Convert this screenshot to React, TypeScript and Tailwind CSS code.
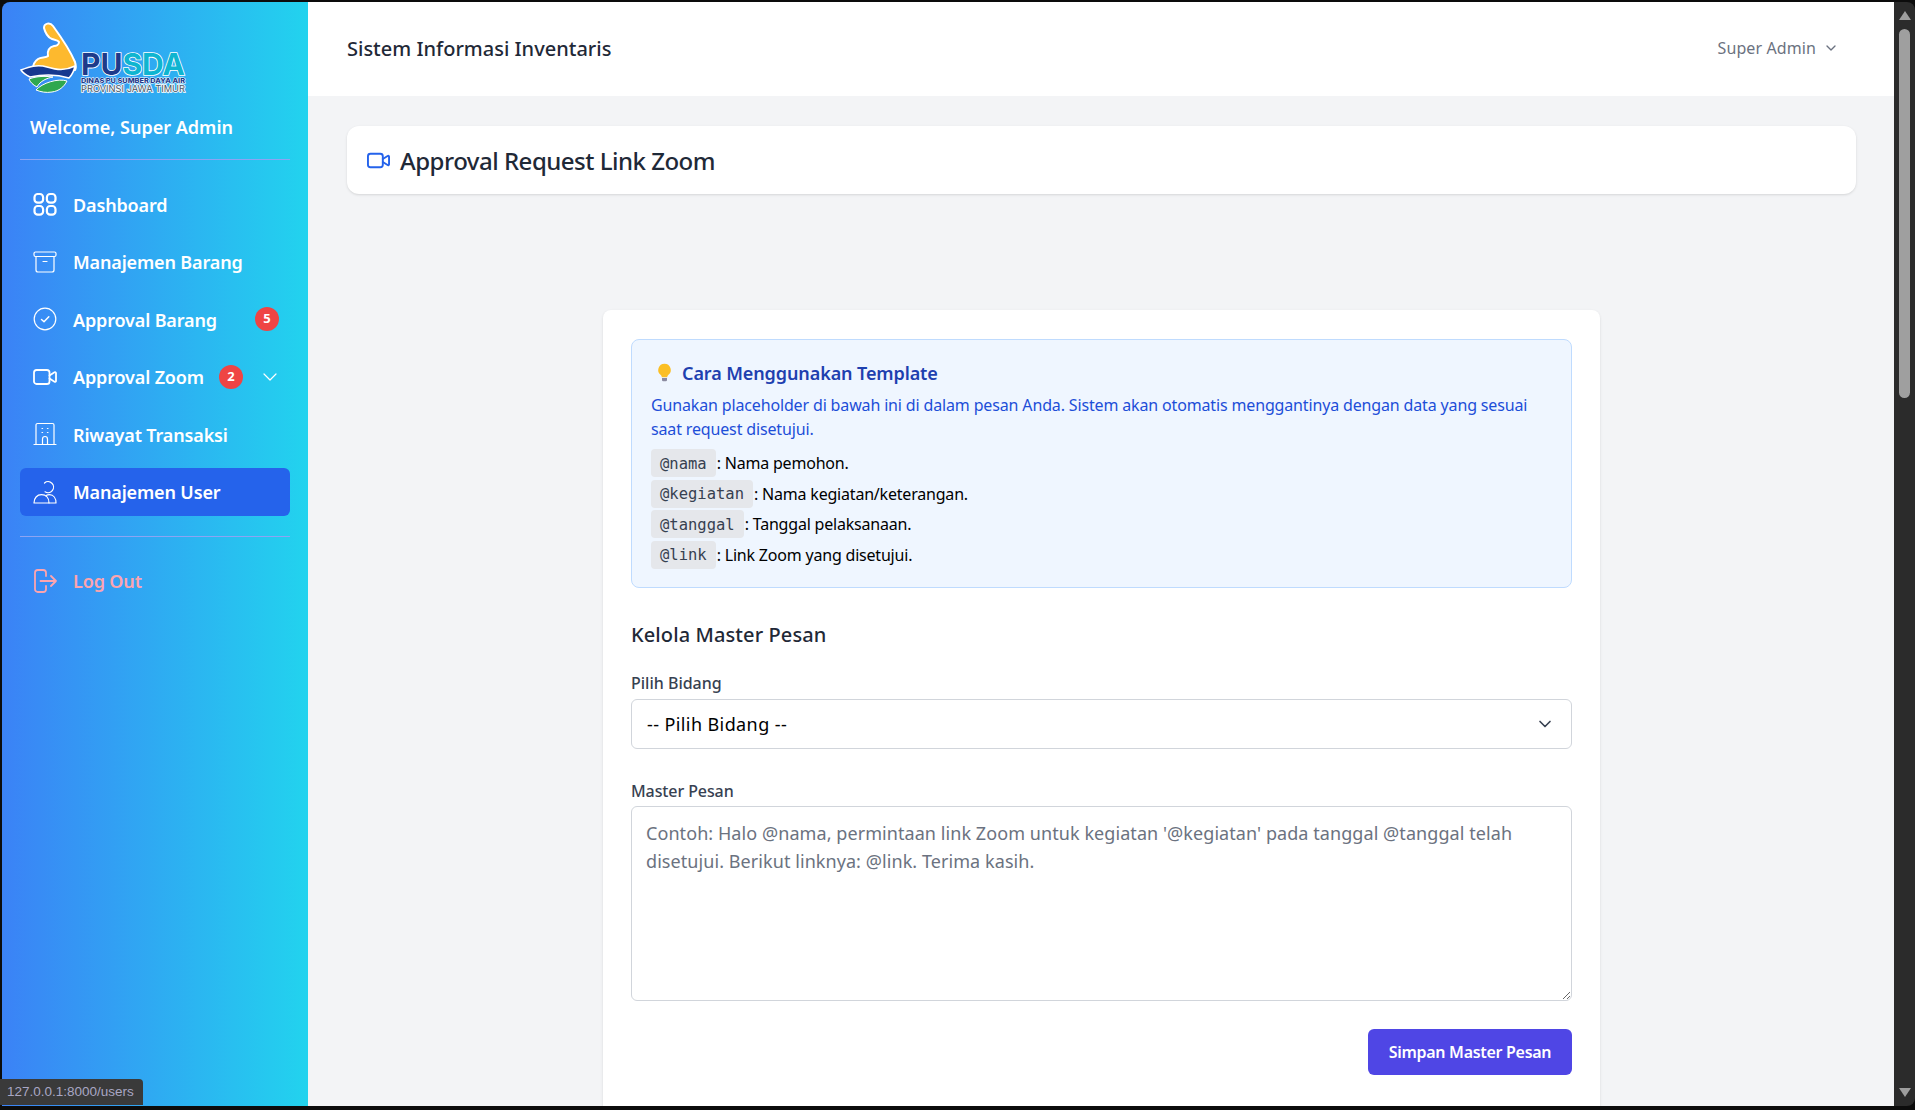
import { ChevronDown } from "lucide-react";
import type { ReactNode } from "react";

const font = "font-['Noto_Sans',sans-serif]";

function Logo() {
  return (
    <svg viewBox="0 0 175 85" className="block w-[175px] h-[85px]">
      <path
        d="M24 13c0-5 6-6 9-2 8 11 17 24 22 36 1 3 1 6 0 8-12 3-28 1-42-1 0-4 2-8 5-10 3-2 8-1 10-3-1-5 1-9 6-10 2 0 5-1 5-4-1-2-4-2-7-3-4-1-7-7-8-11z"
        fill="#fdb92e"
        stroke="#fff"
        strokeWidth="2"
      />
      <path
        d="M1 55c8-3 16-6 26-3 10 3 18 4 28-1-1 5-3 9-6 12-10-3-24-4-39-1-4-2-7-4-9-7z"
        fill="#16388f"
        stroke="#fff"
        strokeWidth="1.5"
      />
      <path
        d="M9 64c8-3 16-3 24-2-6 1-13 4-16 10-4-2-7-5-8-8z"
        fill="#2fa84f"
        stroke="#fff"
        strokeWidth="1"
      />
      <path
        d="M16 75c6-7 22-12 31-9-3 6-8 10-15 11-6 1-11 0-16-2z"
        fill="#2fa84f"
        stroke="#fff"
        strokeWidth="1"
      />
      <text
        x="61"
        y="60"
        fontFamily="Inter, sans-serif"
        fontSize="30"
        fontWeight="700"
        textLength="104"
        lengthAdjust="spacingAndGlyphs"
        stroke="#fff"
        strokeWidth="1.6"
        paintOrder="stroke"
      >
        <tspan fill="#1e3a8a">PU</tspan>
        <tspan fill="#0fb5d0">SDA</tspan>
      </text>
      <text
        x="61"
        y="68"
        fontFamily="Inter, sans-serif"
        fontSize="6.4"
        fontWeight="800"
        fill="#1e3a8a"
        textLength="104"
        lengthAdjust="spacingAndGlyphs"
        stroke="#fff"
        strokeWidth="1"
        paintOrder="stroke"
      >
        DINAS PU SUMBER DAYA AIR
      </text>
      <text
        x="61"
        y="77"
        fontFamily="Inter, sans-serif"
        fontSize="9"
        fontWeight="400"
        fill="#4b5563"
        textLength="104"
        lengthAdjust="spacingAndGlyphs"
        stroke="#fff"
        strokeWidth="1.6"
        paintOrder="stroke"
      >
        PROVINSI JAWA TIMUR
      </text>
    </svg>
  );
}

function Icon({ children, className }: { children: ReactNode; className?: string }) {
  return (
    <svg
      viewBox="0 0 24 24"
      fill="none"
      stroke="currentColor"
      strokeLinecap="round"
      strokeLinejoin="round"
      className={className ?? "w-6 h-6 shrink-0"}
    >
      {children}
    </svg>
  );
}

function GridIcon() {
  return (
    <Icon>
      <g strokeWidth="2.2">
        <rect x="1.5" y="2" width="8.6" height="8.6" rx="3.2" />
        <rect x="13.9" y="2" width="8.6" height="8.6" rx="3.2" />
        <rect x="1.5" y="14" width="8.6" height="8.6" rx="3.2" />
        <rect x="13.9" y="14" width="8.6" height="8.6" rx="3.2" />
      </g>
    </Icon>
  );
}

function BoxIcon() {
  return (
    <Icon>
      <g strokeWidth="1.2">
        <rect x="1" y="2" width="22" height="4.5" rx="1.5" />
        <path d="M3 6.5V20a2 2 0 0 0 2 2h14a2 2 0 0 0 2-2V6.5" />
        <path d="M10 11.5h4" />
      </g>
    </Icon>
  );
}

function CheckIcon() {
  return (
    <Icon>
      <g strokeWidth="1.2">
        <circle cx="12" cy="12" r="10.8" />
        <path d="M8.5 12.5l2.5 2.2 4.8-5" strokeWidth="1.5" />
      </g>
    </Icon>
  );
}

function VideoIcon({ className, width = 1.8 }: { className?: string; width?: number }) {
  return (
    <Icon className={className}>
      <g strokeWidth={width}>
        <rect x="1" y="5" width="15.5" height="14" rx="2.6" />
        <path d="M16.5 10.5l5-3.2c.7-.4 1.5 0 1.5.8v7.8c0 .8-.8 1.2-1.5.8l-5-3.2" />
      </g>
    </Icon>
  );
}

function BuildingIcon() {
  return (
    <Icon>
      <g strokeWidth="1.2">
        <path d="M3 22.5V3a1.5 1.5 0 0 1 1.5-1.5h15A1.5 1.5 0 0 1 21 3v19.5" />
        <path d="M1 22.5h22" />
        <path d="M9.5 22.5V17a2.5 2.5 0 0 1 5 0v5.5" />
        <path d="M9 6.5h.6M14.4 6.5h.6M9 10.5h.6M14.4 10.5h.6" />
      </g>
    </Icon>
  );
}

function UserIcon() {
  return (
    <Icon>
      <g strokeWidth="1.2">
        <path d="M11.5 3a5.5 5.5 0 1 1 .5 8.8" />
        <path d="M1 23c0-5 3-8.3 7.5-8.3S16 18 16 23z" />
        <path d="M13 15.6c1-.6 2.2-.9 3.5-.9 4 0 6.5 3.5 6.5 8.3h-7" />
      </g>
    </Icon>
  );
}

function LogoutIcon() {
  return (
    <Icon>
      <g strokeWidth="1.8">
        <path d="M13 7V3.8A2.8 2.8 0 0 0 10.2 1H4.8A2.8 2.8 0 0 0 2 3.8v16.4A2.8 2.8 0 0 0 4.8 23h5.4a2.8 2.8 0 0 0 2.8-2.8V17" />
        <path d="M7.5 12H23M18 7l5 5-5 5" />
      </g>
    </Icon>
  );
}

function Badge({ value }: { value: number }) {
  return (
    <span className="flex items-center justify-center w-6 h-6 rounded-full bg-[#ef4444] text-white text-[13px] font-bold shrink-0">
      {value}
    </span>
  );
}

function NavItem({
  icon,
  label,
  active,
  children,
}: {
  icon: ReactNode;
  label: string;
  active?: boolean;
  children?: ReactNode;
}) {
  return (
    <div
      className={`flex items-center h-12 pl-[13px] pr-[10px] rounded-md text-white ${
        active ? "bg-[#2563eb]" : ""
      }`}
    >
      {icon}
      <span className="ml-[16px] pt-[2px] text-[18px] font-semibold tracking-[-0.15px] whitespace-nowrap">
        {label}
      </span>
      {children}
    </div>
  );
}

function Sidebar() {
  return (
    <aside className="w-[306px] shrink-0 rounded-tl-lg bg-[linear-gradient(to_right,#3b82f6,#22d3ee)] px-[18px] overflow-hidden">
      <div className="pt-[13px]">
        <Logo />
      </div>
      <p className="mt-[13px] ml-[10px] text-[18px] leading-7 font-semibold text-white">
        Welcome, Super Admin
      </p>
      <div className="mt-[18px] h-px bg-[#8ca4f3]" />
      <nav className="mt-[20px] flex flex-col gap-[9.5px]">
        <NavItem icon={<GridIcon />} label="Dashboard" />
        <NavItem icon={<BoxIcon />} label="Manajemen Barang" />
        <NavItem icon={<CheckIcon />} label="Approval Barang">
          <span className="ml-auto mr-[1px]">
            <Badge value={5} />
          </span>
        </NavItem>
        <NavItem icon={<VideoIcon />} label="Approval Zoom">
          <span className="ml-[15px]">
            <Badge value={2} />
          </span>
          <ChevronDown className="ml-auto -mr-[2px] w-6 h-6 text-white" strokeWidth={1.2} />
        </NavItem>
        <NavItem icon={<BuildingIcon />} label="Riwayat Transaksi" />
        <NavItem icon={<UserIcon />} label="Manajemen User" active />
      </nav>
      <div className="mt-[20px] h-px bg-[#8ca4f3]" />
      <div className="mt-[20px] flex items-center h-12 pl-[13px] text-[#fda4af]">
        <LogoutIcon />
        <span className="ml-[16px] pt-[2px] text-[18px] font-semibold tracking-[-0.15px]">Log Out</span>
      </div>
    </aside>
  );
}

function Header() {
  return (
    <header className="h-[94px] shrink-0 bg-white flex items-center justify-between pl-[39px] pr-[55px]">
      <h1 className="text-[20px] font-medium text-[#1f2937]">Sistem Informasi Inventaris</h1>
      <div className="flex items-center gap-[7px] text-[#6b7280] -mt-[2px]">
        <span className="text-[16px] tracking-[0.1px]">Super Admin</span>
        <ChevronDown className="w-4 h-4" strokeWidth={2} />
      </div>
    </header>
  );
}

function Placeholder({ code, text }: { code: string; text: string }) {
  return (
    <li className="h-[30.5px] flex items-center text-[16px] tracking-[-0.2px] text-black">
      <code className="bg-[#e5e7eb] rounded h-7 px-[9px] pt-[2px] flex items-center font-['DejaVu_Sans_Mono',monospace] text-[#374151] text-[15.5px] tracking-normal">
        {code}
      </code>
      <span className="ml-[1px]">: {text}</span>
    </li>
  );
}

function InfoBox() {
  return (
    <div className="rounded-lg border border-[#bfdbfe] bg-[#eff6ff] px-[19px] pt-[19px] pb-[17px]">
      <div className="flex items-center h-7">
        <svg viewBox="0 0 20 24" className="w-[17px] h-[20px] ml-[5px] shrink-0">
          <path d="M10 1a7.5 7.5 0 0 0-4.5 13.5c.8.7 1.2 1.6 1.3 2.5h6.4c.1-.9.5-1.8 1.3-2.5A7.5 7.5 0 0 0 10 1z" fill="#fbbf24" />
          <path d="M7 18h6v2.5a1.5 1.5 0 0 1-1.5 1.5h-3A1.5 1.5 0 0 1 7 20.5z" fill="#8b8ba0" />
        </svg>
        <h3 className="ml-[9px] text-[18px] font-semibold tracking-[-0.1px] text-[#1e40af]">
          Cara Menggunakan Template
        </h3>
      </div>
      <p className="mt-[6px] text-[16px] leading-6 tracking-[-0.15px] text-[#1d4ed8]">
        Gunakan placeholder di bawah ini di dalam pesan Anda. Sistem akan otomatis menggantinya
        dengan data yang sesuai saat request disetujui.
      </p>
      <ul className="mt-[7px]">
        <Placeholder code="@nama" text="Nama pemohon." />
        <Placeholder code="@kegiatan" text="Nama kegiatan/keterangan." />
        <Placeholder code="@tanggal" text="Tanggal pelaksanaan." />
        <Placeholder code="@link" text="Link Zoom yang disetujui." />
      </ul>
    </div>
  );
}

function FormCard() {
  return (
    <section className="mx-auto w-[997px] bg-white rounded-t-lg px-[28px] pt-[29px] pb-10 shadow-sm">
      <InfoBox />
      <h2 className="mt-[33px] text-[20px] leading-7 font-medium tracking-[0.1px] text-[#1f2937]">
        Kelola Master Pesan
      </h2>
      <label className="block mt-[22px] text-[16px] leading-6 font-medium text-[#374151]">
        Pilih Bidang
      </label>
      <div className="relative mt-[4px]">
        <select className="block w-full h-[50px] appearance-none rounded-md border border-[#d1d5db] bg-white pl-[15px] text-[18px] tracking-[0.4px] text-black outline-none">
          <option>-- Pilih Bidang --</option>
        </select>
        <ChevronDown
          className="absolute right-[17px] top-[15px] w-5 h-5 text-[#374151] pointer-events-none"
          strokeWidth={2}
        />
      </div>
      <label className="block mt-[30px] text-[16px] leading-6 font-medium tracking-[-0.1px] text-[#374151]">
        Master Pesan
      </label>
      <textarea
        className="block mt-[3px] w-full h-[195px] rounded-md border border-[#d1d5db] bg-white px-[14px] pt-[13px] text-[18px] leading-[27.5px] tracking-[0.07px] outline-none placeholder:text-[#6b7280]"
        placeholder="Contoh: Halo @nama, permintaan link Zoom untuk kegiatan '@kegiatan' pada tanggal @tanggal telah disetujui. Berikut linknya: @link. Terima kasih."
      />
      <div className="mt-[28px] flex justify-end">
        <button className="w-[204px] h-[46px] rounded-md bg-[#4f46e5] text-white text-[16px] font-semibold tracking-[-0.3px]">
          Simpan Master Pesan
        </button>
      </div>
    </section>
  );
}

function Scrollbar() {
  return (
    <div className="w-[21px] shrink-0 bg-[#2b2b2b] rounded-tr-lg rounded-br-lg flex flex-col items-center py-[9px]">
      <svg viewBox="0 0 12 9" className="w-3 h-[9px] shrink-0">
        <polygon points="6,0 12,9 0,9" fill="#9d9d9d" />
      </svg>
      <div className="mt-[9px] w-[11px] h-[369px] rounded-full bg-[#9f9f9f]" />
      <div className="flex-1" />
      <svg viewBox="0 0 12 9" className="w-3 h-[9px] shrink-0">
        <polygon points="0,0 12,0 6,9" fill="#9d9d9d" />
      </svg>
    </div>
  );
}

export default function App() {
  return (
    <div className={`${font} relative h-[1110px] overflow-hidden bg-[#0c0c0c] pt-[2px] pb-[4px] pl-[2px] flex`}>
      <Sidebar />
      <div className="flex-1 min-w-0 flex flex-col bg-[#f3f4f6] overflow-hidden">
        <Header />
        <main className="flex-1 min-h-0 overflow-hidden pl-[39px] pr-[38px] pt-[30px]">
          <div className="h-[68px] bg-white rounded-xl shadow-sm flex items-center pl-[20px]">
            <VideoIcon className="w-[23px] h-[23px] text-[#2563eb] shrink-0" width={2} />
            <h2 className="ml-[10px] mt-[2px] text-[24px] font-medium tracking-[-0.5px] text-[#1f2937]">
              Approval Request Link Zoom
            </h2>
          </div>
          <div className="mt-[116px]">
            <FormCard />
          </div>
        </main>
      </div>
      <Scrollbar />
      <div className="absolute left-0 bottom-[5px] h-[26px] w-[143px] bg-[#3a3a3a] rounded-tr text-[#a9a7c4] text-[13.5px] flex items-center pl-[7px] font-['Liberation_Sans',sans-serif]">
        127.0.0.1:8000/users
      </div>
    </div>
  );
}
